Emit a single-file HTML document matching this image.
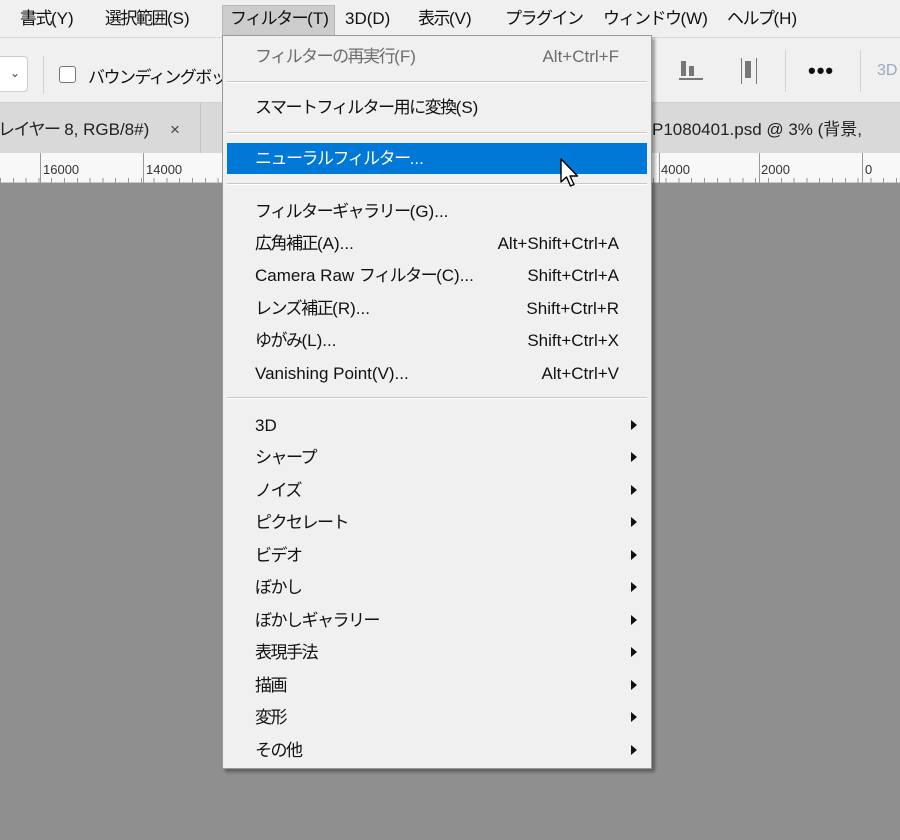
<!DOCTYPE html>
<html><head><meta charset="utf-8"><style>
*{margin:0;padding:0;box-sizing:border-box}
body{width:900px;height:840px;overflow:hidden;background:#8f8f8f;font-family:"Liberation Sans","Noto Sans CJK JP",sans-serif;color:#111;position:relative}
.abs{position:absolute}
.j{letter-spacing:-1.5px}
#menubar{left:0;top:0;width:900px;height:37px;background:#f0f0f0;font-size:17px}
#menubar span{position:absolute;top:8px;line-height:22px;height:22px;white-space:nowrap}
#tool{left:0;top:37px;width:900px;height:66px;background:#f0f0f0;border-top:1px solid #d8d8d8;border-bottom:1px solid #d0d0d0}
#tabs{left:0;top:103px;width:900px;height:51px;background:#d9d9d9}
#ruler{left:0;top:153px;width:900px;height:30px;background:#f8f8f8;border-bottom:1px solid #ccc}
.rl{position:absolute;top:0;width:1px;height:30px;background:#999}
.rt{position:absolute;top:9px;font-size:13px;color:#333}
#menu{left:222px;top:35px;width:430px;height:734px;background:#f0f0f0;border:1px solid #9a9a9a;box-shadow:3px 3px 3px rgba(0,0,0,.35);font-size:17px}
.it,.sc{position:absolute;white-space:nowrap;line-height:24px;height:24px}
.it{left:32px}
.sc{right:32px}
.sep{position:absolute;left:4px;right:4px;height:2px;border-top:1px solid #c8c8c8;border-bottom:1px solid #fff}
.ar{position:absolute;right:14px;width:0;height:0;border-left:6px solid #111;border-top:5px solid transparent;border-bottom:5px solid transparent}
</style></head><body>
<div id="menubar" class="abs">
<span style="left:20px"><span class="j" style="position:static">書式</span>(Y)</span>
<span style="left:105px"><span class="j" style="position:static">選択範囲</span>(S)</span>
<div class="abs" style="left:222px;top:5px;width:113px;height:30px;background:#cccccc;border:1px solid #b8b8b8;border-bottom:none"></div>
<span style="left:230px"><span class="j" style="position:static">フィルター</span>(T)</span>
<span style="left:345px">3D(D)</span>
<span style="left:418px"><span class="j" style="position:static">表示</span>(V)</span>
<span style="left:505px" class="j">プラグイン</span>
<span style="left:603px"><span class="j" style="position:static">ウィンドウ</span>(W)</span>
<span style="left:727px"><span class="j" style="position:static">ヘルプ</span>(H)</span>
</div>
<div id="tool" class="abs">
<div class="abs" style="left:-6px;top:18px;width:34px;height:36px;background:#fff;border:1px solid #ccc;border-radius:4px"></div>
<div class="abs" style="left:10px;top:28px;font-size:12px;color:#444">&#8964;</div>
<div class="abs" style="left:43px;top:18px;width:1px;height:38px;background:#d0d0d0"></div>
<div class="abs" style="left:59px;top:28px;width:17px;height:17px;border:1px solid #777;border-radius:3px;background:#fff"></div>
<div class="abs j" style="left:88px;top:25px;font-size:17px;white-space:nowrap">バウンディングボックス</div>
<div class="abs" style="left:681px;top:23px;width:5px;height:15px;background:#777"></div>
<div class="abs" style="left:689px;top:28px;width:5px;height:10px;background:#777"></div>
<div class="abs" style="left:679px;top:40px;width:24px;height:2px;background:#777"></div>
<div class="abs" style="left:741px;top:20px;width:1px;height:26px;background:#777"></div>
<div class="abs" style="left:745px;top:23px;width:6px;height:17px;background:#777"></div>
<div class="abs" style="left:756px;top:20px;width:1px;height:26px;background:#777"></div>
<div class="abs" style="left:785px;top:12px;width:1px;height:42px;background:#d0d0d0"></div>
<div class="abs" style="left:808px;top:20px;font-size:22px;font-weight:bold;letter-spacing:1px">•••</div>
<div class="abs" style="left:860px;top:12px;width:1px;height:42px;background:#d0d0d0"></div>
<div class="abs" style="left:877px;top:24px;font-size:16px;color:#9aa8c0">3D</div>
</div>
<div id="tabs" class="abs">
<div class="abs" style="left:0;top:0;width:201px;height:50px;background:#d9d9d9;border-right:1px solid #c4c4c4"></div>
<div class="abs" style="left:-2px;top:15px;font-size:17px;color:#222;white-space:nowrap;line-height:24px"><span class="j">レイヤー</span> 8, RGB/8#)</div>
<div class="abs" style="left:170px;top:15px;font-size:17px;color:#444;line-height:24px">×</div>
<div class="abs" style="left:652px;top:15px;font-size:17px;color:#222;white-space:nowrap;line-height:24px">P1080401.psd @ 3% (背景, </div>
</div>
<div id="ruler" class="abs">
<div class="rl" style="left:40px"></div><div class="rt" style="left:43px">16000</div>
<div class="rl" style="left:143px"></div><div class="rt" style="left:146px">14000</div>
<div class="rl" style="left:659px"></div><div class="rt" style="left:661px">4000</div>
<div class="rl" style="left:759px"></div><div class="rt" style="left:761px">2000</div>
<div class="rl" style="left:862px"></div><div class="rt" style="left:865px">0</div>
<div class="abs" style="left:0;top:25px;width:900px;height:5px;background:repeating-linear-gradient(90deg,#999 0 1px,transparent 1px 12.8px)"></div>
</div>
<div id="menu" class="abs">
<div class="it" style="top:9px;color:#6d6d6d"><span class="j">フィルターの再実行</span>(F)</div><div class="sc" style="top:9px;color:#6d6d6d">Alt+Ctrl+F</div>
<div class="sep" style="top:45px"></div>
<div class="it" style="top:60px"><span class="j">スマートフィルター用に変換</span>(S)</div>
<div class="sep" style="top:96px"></div>
<div class="abs" style="left:4px;top:107px;width:420px;height:31px;background:#0078d7"></div>
<div class="it" style="top:111px;color:#fff"><span class="j">ニューラルフィルター</span>...</div>
<div class="sep" style="top:147px"></div>
<div class="it" style="top:164px"><span class="j">フィルターギャラリー</span>(G)...</div>
<div class="it" style="top:196px"><span class="j">広角補正</span>(A)...</div><div class="sc" style="top:196px">Alt+Shift+Ctrl+A</div>
<div class="it" style="top:228px">Camera Raw <span class="j">フィルター</span>(C)...</div><div class="sc" style="top:228px">Shift+Ctrl+A</div>
<div class="it" style="top:261px"><span class="j">レンズ補正</span>(R)...</div><div class="sc" style="top:261px">Shift+Ctrl+R</div>
<div class="it" style="top:293px"><span class="j">ゆがみ</span>(L)...</div><div class="sc" style="top:293px">Shift+Ctrl+X</div>
<div class="it" style="top:326px">Vanishing Point(V)...</div><div class="sc" style="top:326px">Alt+Ctrl+V</div>
<div class="sep" style="top:361px"></div>
<div class="it" style="top:378px">3D</div><div class="ar" style="top:384px"></div>
<div class="it j" style="top:410px">シャープ</div><div class="ar" style="top:416px"></div>
<div class="it j" style="top:443px">ノイズ</div><div class="ar" style="top:449px"></div>
<div class="it j" style="top:475px">ピクセレート</div><div class="ar" style="top:481px"></div>
<div class="it j" style="top:508px">ビデオ</div><div class="ar" style="top:514px"></div>
<div class="it j" style="top:540px">ぼかし</div><div class="ar" style="top:546px"></div>
<div class="it j" style="top:573px">ぼかしギャラリー</div><div class="ar" style="top:579px"></div>
<div class="it j" style="top:605px">表現手法</div><div class="ar" style="top:611px"></div>
<div class="it j" style="top:638px">描画</div><div class="ar" style="top:644px"></div>
<div class="it j" style="top:670px">変形</div><div class="ar" style="top:676px"></div>
<div class="it j" style="top:703px">その他</div><div class="ar" style="top:709px"></div>
</div>
<svg class="abs" style="left:558px;top:157px" width="26" height="34" viewBox="0 0 26 34"><path d="M3 2 L3 25 L8.5 20 L12.5 29 L16 27.5 L12 19 L19.5 19 Z" fill="#fff" stroke="#000" stroke-width="1.4" stroke-linejoin="round"/></svg>
</body></html>
